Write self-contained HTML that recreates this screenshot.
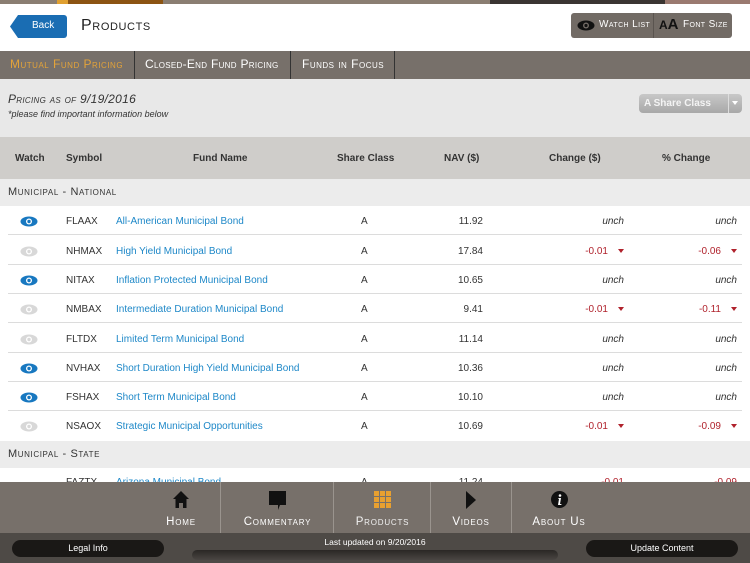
<!DOCTYPE html>
<html><head><meta charset="utf-8"><style>
*{margin:0;padding:0;box-sizing:border-box}
body{width:750px;height:563px;overflow:hidden;background:#fff;font-family:"Liberation Sans",sans-serif;position:relative}
.a{position:absolute}
.sc{font-variant:small-caps;letter-spacing:0.6px}
.row{position:absolute;left:0;width:750px;height:29px;font-size:10px;color:#333}
.row .sep{position:absolute;left:8px;right:8px;bottom:0;height:1px;background:#dcdcdc}
.row span{position:absolute;top:10px}
.nm{left:116px;color:#1e88c8}
.sym{left:66px}
.cls{left:361px}
.nav{right:267px}
.ch{right:126px}
.pc{right:13px}
.red{color:#b0222c}
.u{font-style:italic}
.eye{position:absolute;left:20px;top:10px}
.tri{display:inline-block;width:0;height:0;border-left:3px solid transparent;border-right:3px solid transparent;border-top:4px solid #b0222c;margin-left:10px;vertical-align:1px}
.navi{position:absolute;top:482px;height:51px;text-align:center;color:#fff;font-size:11.5px;font-variant:small-caps;letter-spacing:0.8px}
.navi .t{position:absolute;bottom:5px;left:0;right:0}
.dv{position:absolute;top:482px;height:51px;width:1px;background:#9a948e}
</style></head><body>
<div class="a" style="top:0;left:0;width:750px;height:4px;background:#8a7e72"></div>
<div class="a" style="top:0;left:57px;width:11px;height:4px;background:#e0a030"></div>
<div class="a" style="top:0;left:68px;width:95px;height:4px;background:#8c5412"></div>
<div class="a" style="top:0;left:490px;width:175px;height:4px;background:#3a3532"></div>
<div class="a" style="top:0;left:665px;width:85px;height:4px;background:#9a7a70"></div>

<svg class="a" style="left:10px;top:15px" width="57" height="23"><path d="M8 0H54a3 3 0 0 1 3 3V20a3 3 0 0 1-3 3H8L0 11.5Z" fill="#1a6db3"/></svg>
<div class="a" style="left:32px;top:20px;color:#fff;font-size:10px">Back</div>
<div class="a sc" style="left:81px;top:17px;font-size:16px;color:#222;letter-spacing:0.6px">Products</div>

<div class="a" style="left:571px;top:13px;width:161px;height:25px;background:#726b65;border-radius:3px"></div>
<div class="a" style="left:653px;top:13px;width:1px;height:25px;background:#5a544f"></div>
<svg class="a" style="left:577px;top:20px" width="18" height="11"><ellipse cx="9" cy="5.5" rx="8.5" ry="5" fill="#111"/><circle cx="9" cy="5.5" r="3" fill="#726b65"/><circle cx="9" cy="5.5" r="1.6" fill="#111"/></svg>
<div class="a sc" style="left:599px;top:19px;font-size:10px;color:#fff;letter-spacing:0.4px">Watch List</div>
<div class="a" style="left:659px;top:16px;font-size:15px;color:#111;font-weight:bold"><span style="font-size:12px">A</span>A</div>
<div class="a sc" style="left:683px;top:19px;font-size:10px;color:#fff;letter-spacing:0.4px">Font Size</div>

<div class="a" style="top:51px;left:0;width:750px;height:28px;background:#77706a"></div>
<div class="a" style="top:51px;left:134px;width:1px;height:28px;background:#333"></div>
<div class="a" style="top:51px;left:290px;width:1px;height:28px;background:#333"></div>
<div class="a" style="top:51px;left:394px;width:1px;height:28px;background:#333"></div>
<div class="a sc" style="top:57px;left:10px;font-size:12px;color:#e3a33a;letter-spacing:0.5px">Mutual Fund Pricing</div>
<div class="a sc" style="top:57px;left:145px;font-size:12px;color:#fff;letter-spacing:0.3px">Closed-End Fund Pricing</div>
<div class="a sc" style="top:57px;left:302px;font-size:12px;color:#fff;letter-spacing:0.5px">Funds in Focus</div>

<div class="a" style="top:79px;left:0;width:750px;height:58px;background:#e8e8e8"></div>
<div class="a sc" style="top:92px;left:8px;font-size:12px;color:#333;font-style:italic;letter-spacing:0.3px">Pricing as of 9/19/2016</div>
<div class="a" style="top:109px;left:8px;font-size:9px;color:#333;font-style:italic">*please find important information below</div>
<div class="a" style="top:94px;left:639px;width:103px;height:19px;border-radius:4px;background:linear-gradient(#c8c8c8,#a8a8a8)"></div>
<div class="a" style="top:94px;left:728px;width:1px;height:19px;background:#ddd"></div>
<div class="a" style="top:98px;left:644px;font-size:10px;font-weight:bold;color:#f4f4f4">A Share Class</div>
<div class="a" style="top:101px;left:732px;border-left:3px solid transparent;border-right:3px solid transparent;border-top:4px solid #fff"></div>

<div class="a" style="top:137px;left:0;width:750px;height:42px;background:#cfcdca;font-size:10px;font-weight:bold;color:#333">
<span class="a" style="left:15px;top:16px">Watch</span>
<span class="a" style="left:66px;top:16px">Symbol</span>
<span class="a" style="left:193px;top:16px">Fund Name</span>
<span class="a" style="left:337px;top:16px">Share Class</span>
<span class="a" style="left:444px;top:16px">NAV ($)</span>
<span class="a" style="left:549px;top:16px">Change ($)</span>
<span class="a" style="left:662px;top:16px">% Change</span>
</div>
<div class="a" style="top:179px;left:0;width:750px;height:27px;background:#ececec"></div>
<div class="a sc" style="top:186px;left:8px;font-size:11px;color:#333">Municipal - National</div>

<div class="row" style="top:206px"><svg class="eye" width="18" height="11"><ellipse cx="9" cy="5.5" rx="8.5" ry="5" fill="#1878c0"/><circle cx="9" cy="5.5" r="3" fill="#fff"/><circle cx="9" cy="5.5" r="1.7" fill="#1878c0"/></svg><span class="sym">FLAAX</span><span class="nm">All-American Municipal Bond</span><span class="cls">A</span><span class="nav">11.92</span><span class="ch u">unch</span><span class="pc u">unch</span><div class="sep"></div></div>
<div class="row" style="top:236px"><svg class="eye" width="18" height="11"><ellipse cx="9" cy="5.5" rx="8.5" ry="5" fill="#d8d8d8"/><circle cx="9" cy="5.5" r="3" fill="#fff"/><circle cx="9" cy="5.5" r="1.7" fill="#d8d8d8"/></svg><span class="sym">NHMAX</span><span class="nm">High Yield Municipal Bond</span><span class="cls">A</span><span class="nav">17.84</span><span class="ch red">-0.01<i class="tri"></i></span><span class="pc red">-0.06<i class="tri"></i></span><div class="sep"></div></div>
<div class="row" style="top:265px"><svg class="eye" width="18" height="11"><ellipse cx="9" cy="5.5" rx="8.5" ry="5" fill="#1878c0"/><circle cx="9" cy="5.5" r="3" fill="#fff"/><circle cx="9" cy="5.5" r="1.7" fill="#1878c0"/></svg><span class="sym">NITAX</span><span class="nm">Inflation Protected Municipal Bond</span><span class="cls">A</span><span class="nav">10.65</span><span class="ch u">unch</span><span class="pc u">unch</span><div class="sep"></div></div>
<div class="row" style="top:294px"><svg class="eye" width="18" height="11"><ellipse cx="9" cy="5.5" rx="8.5" ry="5" fill="#d8d8d8"/><circle cx="9" cy="5.5" r="3" fill="#fff"/><circle cx="9" cy="5.5" r="1.7" fill="#d8d8d8"/></svg><span class="sym">NMBAX</span><span class="nm">Intermediate Duration Municipal Bond</span><span class="cls">A</span><span class="nav">9.41</span><span class="ch red">-0.01<i class="tri"></i></span><span class="pc red">-0.11<i class="tri"></i></span><div class="sep"></div></div>
<div class="row" style="top:324px"><svg class="eye" width="18" height="11"><ellipse cx="9" cy="5.5" rx="8.5" ry="5" fill="#d8d8d8"/><circle cx="9" cy="5.5" r="3" fill="#fff"/><circle cx="9" cy="5.5" r="1.7" fill="#d8d8d8"/></svg><span class="sym">FLTDX</span><span class="nm">Limited Term Municipal Bond</span><span class="cls">A</span><span class="nav">11.14</span><span class="ch u">unch</span><span class="pc u">unch</span><div class="sep"></div></div>
<div class="row" style="top:353px"><svg class="eye" width="18" height="11"><ellipse cx="9" cy="5.5" rx="8.5" ry="5" fill="#1878c0"/><circle cx="9" cy="5.5" r="3" fill="#fff"/><circle cx="9" cy="5.5" r="1.7" fill="#1878c0"/></svg><span class="sym">NVHAX</span><span class="nm">Short Duration High Yield Municipal Bond</span><span class="cls">A</span><span class="nav">10.36</span><span class="ch u">unch</span><span class="pc u">unch</span><div class="sep"></div></div>
<div class="row" style="top:382px"><svg class="eye" width="18" height="11"><ellipse cx="9" cy="5.5" rx="8.5" ry="5" fill="#1878c0"/><circle cx="9" cy="5.5" r="3" fill="#fff"/><circle cx="9" cy="5.5" r="1.7" fill="#1878c0"/></svg><span class="sym">FSHAX</span><span class="nm">Short Term Municipal Bond</span><span class="cls">A</span><span class="nav">10.10</span><span class="ch u">unch</span><span class="pc u">unch</span><div class="sep"></div></div>
<div class="row" style="top:411px"><svg class="eye" width="18" height="11"><ellipse cx="9" cy="5.5" rx="8.5" ry="5" fill="#d8d8d8"/><circle cx="9" cy="5.5" r="3" fill="#fff"/><circle cx="9" cy="5.5" r="1.7" fill="#d8d8d8"/></svg><span class="sym">NSAOX</span><span class="nm">Strategic Municipal Opportunities</span><span class="cls">A</span><span class="nav">10.69</span><span class="ch red">-0.01<i class="tri"></i></span><span class="pc red">-0.09<i class="tri"></i></span></div>
<div class="a" style="top:441px;left:0;width:750px;height:27px;background:#ececec"></div>
<div class="a sc" style="top:448px;left:8px;font-size:11px;color:#333">Municipal - State</div>
<div class="row" style="top:468px"><span class="sym" style="top:9px">FAZTX</span><span class="nm" style="top:9px">Arizona Municipal Bond</span><span class="cls" style="top:9px">A</span><span class="nav" style="top:9px">11.24</span><span class="ch red" style="top:9px">-0.01</span><span class="pc red" style="top:9px">-0.09</span></div>

<div class="a" style="top:482px;left:0;width:750px;height:51px;background:#77706a"></div>
<div class="dv" style="left:220px"></div><div class="dv" style="left:333px"></div><div class="dv" style="left:430px"></div><div class="dv" style="left:511px"></div>
<div class="navi" style="left:150px;width:62px"><svg style="margin-top:9px" width="16" height="17"><path d="M8 0L16 8H13.5V17H10V12H6V17H2.5V8H0Z" fill="#111"/></svg><div class="t">Home</div></div>
<div class="navi" style="left:225px;width:105px"><svg style="margin-top:9px" width="17" height="19"><path d="M0 0H17V14H11L9 19V14H0Z" fill="#111"/></svg><div class="t">Commentary</div></div>
<div class="navi" style="left:340px;width:85px"><svg style="margin-top:9px" width="17" height="17" fill="#e8a030"><rect x="0" y="0" width="5" height="5"/><rect x="6" y="0" width="5" height="5"/><rect x="12" y="0" width="5" height="5"/><rect x="0" y="6" width="5" height="5"/><rect x="6" y="6" width="5" height="5"/><rect x="12" y="6" width="5" height="5"/><rect x="0" y="12" width="5" height="5"/><rect x="6" y="12" width="5" height="5"/><rect x="12" y="12" width="5" height="5"/></svg><div class="t" style="color:#f0f0f0">Products</div></div>
<div class="navi" style="left:435px;width:72px"><svg style="margin-top:9px" width="10" height="18"><path d="M0 0L10 9L0 18Z" fill="#111"/></svg><div class="t">Videos</div></div>
<div class="navi" style="left:520px;width:78px"><svg style="margin-top:9px" width="17" height="17"><circle cx="8.5" cy="8.5" r="8.5" fill="#111"/><circle cx="9" cy="4.5" r="1.3" fill="#fff"/><path d="M7.5 7H10L9 13H10.5L10.3 14H7L8 8H7.3Z" fill="#fff"/></svg><div class="t">About Us</div></div>

<div class="a" style="top:533px;left:0;width:750px;height:30px;background:#4e4a46"></div>
<div class="a" style="top:540px;left:12px;width:152px;height:17px;border-radius:9px;background:#1a1816;color:#fff;font-size:9px;text-align:center;line-height:17px">Legal Info</div>
<div class="a" style="top:540px;left:586px;width:152px;height:17px;border-radius:9px;background:#1a1816;color:#fff;font-size:9px;text-align:center;line-height:17px">Update Content</div>
<div class="a" style="top:537px;left:0;width:750px;text-align:center;color:#fff;font-size:8.5px">Last updated on 9/20/2016</div>
<div class="a" style="top:550px;left:192px;width:366px;height:10px;border-radius:5px;background:linear-gradient(#2a2725,#4a4643)"></div>
</body></html>
